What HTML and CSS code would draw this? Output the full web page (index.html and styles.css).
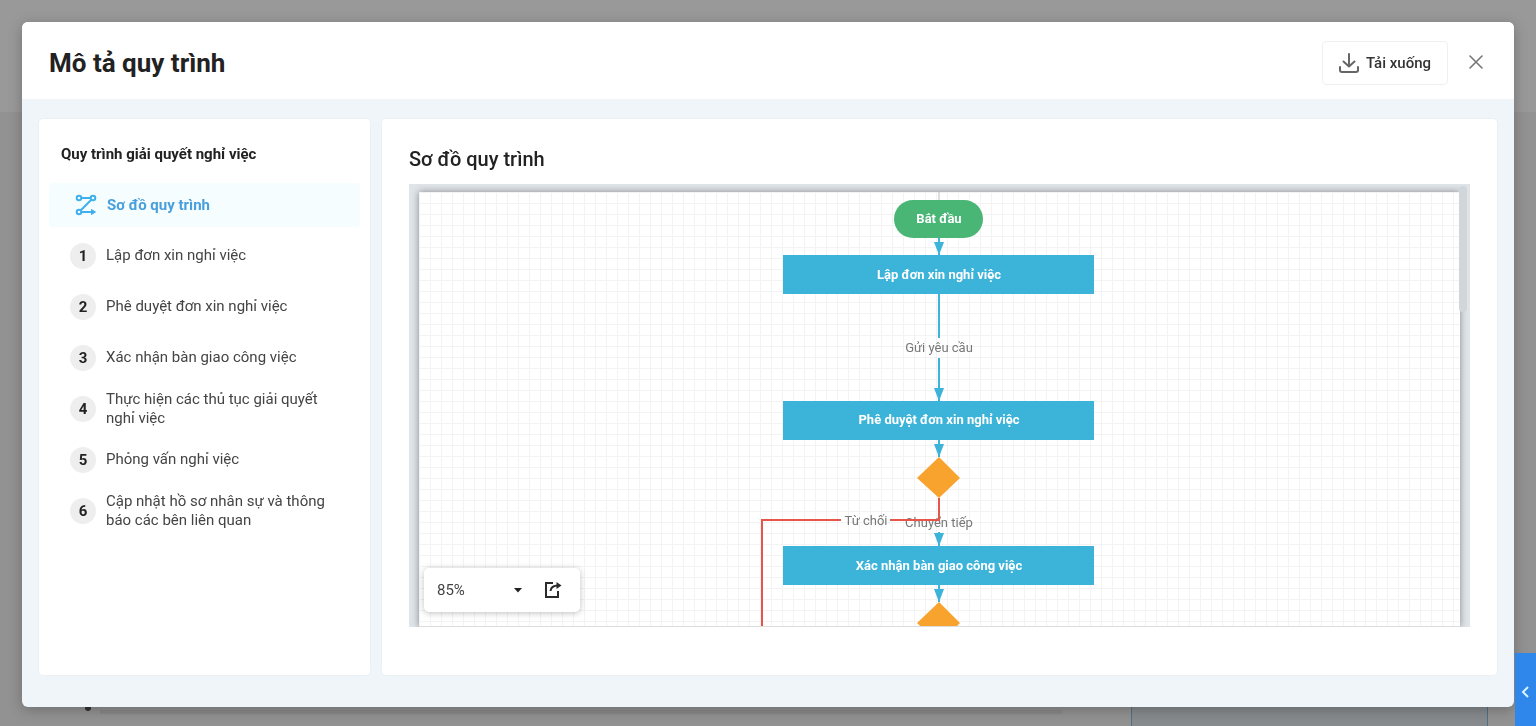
FILE: index.html
```html
<!DOCTYPE html>
<html lang="vi">
<head>
    <meta charset="UTF-8">
    <meta name="viewport" content="width=device-width, initial-scale=1.0">
    <title>Mô tả quy trình</title>
    <link rel="stylesheet" href="styles.css">
</head>
<body>

    <div class="page-behind" aria-hidden="true">
        <div class="behind-top"></div>
        <div class="behind-line"></div>
        <div class="behind-mark"></div>
        <div class="behind-card"></div>
    </div>

    <div class="modal" role="dialog" aria-labelledby="modal-title">
        <header class="modal-header">
            <h1 id="modal-title">Mô tả quy trình</h1>
            <button type="button" class="btn-download">
                <svg width="20" height="20" viewBox="0 0 20 20" fill="none" stroke="#666" stroke-width="2" stroke-linecap="round" stroke-linejoin="round">
                    <path d="M10 1V13M4.500 8.500L10 13.500L15.500 8.500"/>
                    <path d="M1 14V17Q1 19 3 19H17Q19 19 19 17V14"/>
                </svg>
                Tải xuống
            </button>
            <button type="button" class="btn-close" aria-label="Đóng">
                <svg width="14" height="14" viewBox="0 0 14 14" stroke="#777" stroke-width="1.600" stroke-linecap="round">
                    <path d="M1 1L13 13M13 1L1 13"/>
                </svg>
            </button>
        </header>

        <div class="modal-body">
            <nav class="panel sidebar">
                <h2>Quy trình giải quyết nghỉ việc</h2>
                <ul class="steps">
                    <li>
                        <a href="#so-do" class="step active">
                            <svg width="22" height="22" viewBox="0 0 22 22" fill="none" stroke="#3fb0ec" stroke-width="2">
                                <circle cx="4" cy="4" r="2.300"/>
                                <circle cx="18" cy="4" r="2.300"/>
                                <circle cx="4" cy="18" r="2.300"/>
                                <path d="M6.500 4H15.500M16.300 5.800L5.800 16.200M6.500 18H18"/>
                                <path d="M16.500 15.500L20.500 18L16.500 20.500Z" fill="#3fb0ec" stroke-width="1"/>
                            </svg>
                            <span>Sơ đồ quy trình</span>
                        </a>
                    </li>
                    <li><a href="#b1" class="step"><b class="num">1</b><span>Lập đơn xin nghỉ việc</span></a></li>
                    <li><a href="#b2" class="step"><b class="num">2</b><span>Phê duyệt đơn xin nghỉ việc</span></a></li>
                    <li><a href="#b3" class="step"><b class="num">3</b><span>Xác nhận bàn giao công việc</span></a></li>
                    <li><a href="#b4" class="step"><b class="num">4</b><span>Thực hiện các thủ tục giải quyết nghỉ việc</span></a></li>
                    <li><a href="#b5" class="step"><b class="num">5</b><span>Phỏng vấn nghỉ việc</span></a></li>
                    <li><a href="#b6" class="step"><b class="num">6</b><span>Cập nhật hồ sơ nhân sự và thông báo các bên liên quan</span></a></li>
                </ul>
            </nav>

            <main class="panel content" id="so-do">
                <h2>Sơ đồ quy trình</h2>
                <div class="canvas">
                    <div class="paper">
                        <svg class="diagram" width="364" height="434" viewBox="0 0 364 434">
                            <defs>
                                <marker id="arrow" viewBox="0 0 10 13" refX="5" refY="13" markerWidth="10" markerHeight="13" markerUnits="userSpaceOnUse">
                                    <path d="M0 0H10L5 13Z" fill="#3cb3d9"/>
                                </marker>
                            </defs>
                            <path class="lead" d="M181 0V8"/>
                            <!-- mũi tên -->
                            <path class="flow" d="M181 46V63"/>
                            <path class="flow" d="M181 166V209"/>
                            <path class="flow" d="M181 248V265"/>
                            <path class="flow" d="M181 340V354"/>
                            <path class="flow" d="M181 393V410"/>
                            <path class="flow-plain" d="M181 102V146"/>

                            <rect class="start" x="136" y="8" width="89" height="38" rx="19"/>
                            <rect class="task" x="25" y="63" width="311" height="39"/>
                            <rect class="task" x="25" y="209" width="311" height="39"/>
                            <rect class="task" x="25" y="354" width="311" height="39"/>
                            <path class="gate" d="M181 265L202 286L181 306L159 286Z"/>
                            <path class="gate" d="M181 410L202 431L181 452L159 431Z"/>

                            <text class="node-text" x="181" y="31">Bắt đầu</text>
                            <text class="node-text" x="181" y="87">Lập đơn xin nghỉ việc</text>
                            <text class="node-text" x="181" y="232">Phê duyệt đơn xin nghỉ việc</text>
                            <text class="node-text" x="181" y="378">Xác nhận bàn giao công việc</text>
                            <text class="edge-text" x="181" y="160">Gửi yêu cầu</text>
                            <text class="edge-text" x="181" y="335">Chuyển tiếp</text>
                            <path class="reject" d="M181 306V328H132M83 328H4V435"/>
                            <text class="edge-text" x="108" y="333">Từ chối</text>
                        </svg>
                    </div>
                    <div class="scroll-thumb"></div>
                    <div class="zoom-bar">
                        <label class="zoom-select">
                            <select aria-label="Thu phóng">
                                <option>85%</option>
                                <option>100%</option>
                            </select>
                            <svg width="8" height="5" viewBox="0 0 8 5"><path d="M0 0H8L4 4.500Z" fill="#222"/></svg>
                        </label>
                        <button type="button" aria-label="Mở rộng">
                            <svg width="18" height="18" viewBox="0 0 18 18" fill="none" stroke="#2b2b2b" stroke-width="2">
                                <path d="M9 2H2V16H14V10"/>
                                <path d="M6.500 10C7 6 9.500 4.500 14 4.500"/>
                                <path d="M12.500 1L17.500 4.500L12.500 8Z" fill="#2b2b2b" stroke="none"/>
                            </svg>
                        </button>
                    </div>
                </div>
            </main>
        </div>
    </div>

    <button type="button" class="side-tab" aria-label="Mở bảng bên">
        <svg width="8" height="12" viewBox="0 0 8 12" fill="none" stroke="#d8f4ff" stroke-width="2"><path d="M7 1L2 6L7 11"/></svg>
    </button>

</body>
</html>
```
FILE: styles.css
```css
* { box-sizing: border-box; }
body { margin: 0; min-height: 100vh; display: flex; padding: 22px 22px 19px; overflow: hidden; background: #929292; font-family: Roboto, "Noto Sans", sans-serif; color: #222; }
h1, h2, ul { margin: 0; padding: 0; }
button { font-family: inherit; border: 0; background: none; padding: 0; cursor: pointer; }
svg { display: block; flex: none; }

.page-behind { position: fixed; inset: 0; z-index: -1; }
.behind-top { height: 112px; background: #999; }
.behind-line { position: absolute; left: 100px; right: 474px; bottom: 12px; height: 4px; background: #898989; }
.behind-mark { position: absolute; left: 85px; bottom: 15px; width: 6px; height: 6px; border-radius: 3px; background: #333; }
.behind-card { position: absolute; right: 48px; bottom: 0; width: 357px; height: 60px; background: #878b8e; border: 1px solid #4f7186; border-width: 0 1px; }

.modal { flex: 1; display: flex; flex-direction: column; background: #f0f5fa; border-radius: 6px; overflow: hidden; box-shadow: 0 3px 14px rgba(0,0,0,0.25); }
.modal-header { display: flex; align-items: center; height: 77px; padding: 4px 31px 0 27px; background: #fff; }
.modal-header h1 { flex: 1; font-size: 26px; font-weight: 700; line-height: 32px; }
.btn-download { display: flex; align-items: center; gap: 7px; height: 44px; padding: 0 16px; border: 1px solid #f0f0f0; border-radius: 4px; font-size: 15px; font-weight: 500; color: #333; }
.btn-close { margin-left: 21px; padding-bottom: 2px; }

.modal-body { flex: 1; display: flex; gap: 12px; padding: 20px 17px 32px; }
.panel { background: #fff; border-radius: 4px; box-shadow: 0 0 2px rgba(0,0,0,0.08); }
.sidebar { width: 331px; padding: 26px 10px; }
.sidebar h2 { padding-left: 12px; font-size: 15px; font-weight: 700; line-height: 18px; }
.steps { list-style: none; margin-top: 20px; display: flex; flex-direction: column; gap: 6px; }
.step { display: flex; align-items: center; gap: 10px; min-height: 45px; padding: 0 24px 0 21px; font-size: 15px; line-height: 19px; color: #444; text-decoration: none; }
.step.active { min-height: 44px; padding-left: 26px; background: #f6fdff; border-radius: 4px; color: #489fdc; font-weight: 700; }
.num { flex: none; width: 26px; height: 26px; border-radius: 50%; background: #eee; color: #222; font-weight: 700; line-height: 26px; text-align: center; }

.content { flex: 1; display: flex; flex-direction: column; padding: 28px 27px 48px; }
.content h2 { margin-bottom: 13px; font-size: 20px; font-weight: 500; line-height: 24px; }
.canvas { flex: 1; position: relative; display: flex; padding: 8px 10px 0; background: #dfe4e8; overflow: hidden; }
.paper { flex: 1; display: flex; justify-content: center; background-color: #fff; background-image: linear-gradient(#f3f3f3 1px, transparent 1px), linear-gradient(90deg, #f3f3f3 1px, transparent 1px); background-size: 11px 11px; border-bottom: 1px solid #ddd; box-shadow: 0 0 7px rgba(0,0,0,0.4); }
.scroll-thumb { position: absolute; top: 2px; right: 3px; width: 8px; height: 126px; border-radius: 4px; background: #d0d6da; }

.lead { stroke: #bbb; stroke-width: 1; }
.flow { stroke: #3cb3d9; stroke-width: 2; marker-end: url(#arrow); }
.flow-plain { stroke: #3cb3d9; stroke-width: 2; }
.start { fill: #49b675; }
.task { fill: #3cb3d9; }
.gate { fill: #f9a32f; }
.reject { fill: none; stroke: #e5554a; stroke-width: 2; }
.node-text { fill: #fff; font-size: 13px; font-weight: 700; text-anchor: middle; }
.edge-text { fill: #777; font-size: 13px; text-anchor: middle; }

.zoom-bar { position: absolute; left: 15px; bottom: 15px; display: flex; align-items: center; gap: 22px; width: 156px; height: 44px; padding: 0 18px 0 13px; background: #fff; border-radius: 5px; box-shadow: 0 1px 6px rgba(0,0,0,0.25); }
.zoom-select { flex: 1; display: flex; align-items: center; }
.zoom-select select { flex: 1; appearance: none; border: 0; padding: 0; background: none; font-family: inherit; font-size: 15px; color: #444; }

.side-tab { position: fixed; right: 0; bottom: 0; width: 21px; height: 73px; padding: 4px 0 0 6px; background: #2f86eb; }
```
